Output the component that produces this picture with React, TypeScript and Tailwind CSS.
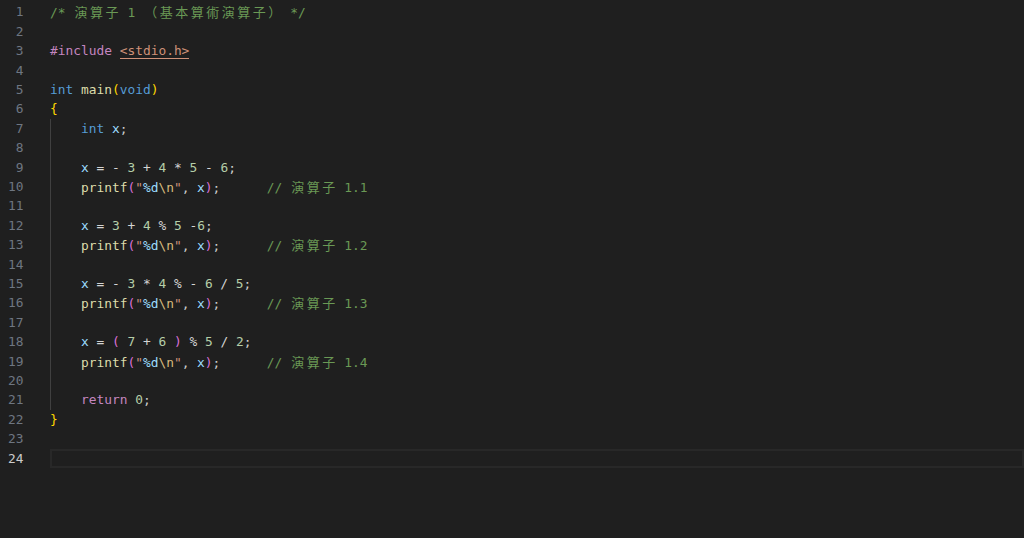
import React from "react";

type Tok = [string, string];

const C = {
  cm: "text-[#6a9955]",
  kw: "text-[#c586c0]",
  ty: "text-[#569cd6]",
  fn: "text-[#dcdcaa]",
  va: "text-[#9cdcfe]",
  op: "text-[#d4d4d4]",
  pu: "text-[#cccccc]",
  nu: "text-[#b5cea8]",
  b1: "text-[#ffd700]",
  b2: "text-[#da70d6]",
  st: "text-[#ce9178]",
  es: "text-[#d7ba7d]",
  inc: "text-[#ce9178] border-b border-[#ce9178]",
};

const CJK = /([\u3000-\u9fff\uff00-\uffef])/;

function renderText(text: string) {
  const parts = text.split(CJK);
  return parts.map((p, i) =>
    p.length === 1 && CJK.test(p) ? (
      <span
        key={i}
        className="inline-block w-[15.5px] text-center text-[13px] leading-[19.42px] font-['Noto_Sans_CJK_TC','Noto_Sans_CJK_JP',sans-serif]"
      >
        {p}
      </span>
    ) : (
      <React.Fragment key={i}>{p}</React.Fragment>
    )
  );
}

const printfLine = (n: string): Tok[] => [
  [C.fn, "printf"],
  [C.b2, "("],
  [C.st, '"'],
  [C.va, "%d"],
  [C.es, "\\n"],
  [C.st, '"'],
  [C.pu, ", "],
  [C.va, "x"],
  [C.b2, ")"],
  [C.pu, ";"],
  [C.op, "      "],
  [C.cm, "// 演算子 " + n],
];

const lines: { toks: Tok[]; guide?: boolean }[] = [
  { toks: [[C.cm, "/* 演算子 1 （基本算術演算子） */"]] },
  { toks: [] },
  { toks: [[C.kw, "#include"], [C.op, " "], [C.inc, "<stdio.h>"]] },
  { toks: [] },
  {
    toks: [
      [C.ty, "int"],
      [C.op, " "],
      [C.fn, "main"],
      [C.b1, "("],
      [C.ty, "void"],
      [C.b1, ")"],
    ],
  },
  { toks: [[C.b1, "{"]] },
  { guide: true, toks: [[C.ty, "int"], [C.op, " "], [C.va, "x"], [C.pu, ";"]] },
  { guide: true, toks: [] },
  {
    guide: true,
    toks: [
      [C.va, "x"],
      [C.op, " = - "],
      [C.nu, "3"],
      [C.op, " + "],
      [C.nu, "4"],
      [C.op, " * "],
      [C.nu, "5"],
      [C.op, " - "],
      [C.nu, "6"],
      [C.pu, ";"],
    ],
  },
  { guide: true, toks: printfLine("1.1") },
  { guide: true, toks: [] },
  {
    guide: true,
    toks: [
      [C.va, "x"],
      [C.op, " = "],
      [C.nu, "3"],
      [C.op, " + "],
      [C.nu, "4"],
      [C.op, " % "],
      [C.nu, "5"],
      [C.op, " -"],
      [C.nu, "6"],
      [C.pu, ";"],
    ],
  },
  { guide: true, toks: printfLine("1.2") },
  { guide: true, toks: [] },
  {
    guide: true,
    toks: [
      [C.va, "x"],
      [C.op, " = - "],
      [C.nu, "3"],
      [C.op, " * "],
      [C.nu, "4"],
      [C.op, " % - "],
      [C.nu, "6"],
      [C.op, " / "],
      [C.nu, "5"],
      [C.pu, ";"],
    ],
  },
  { guide: true, toks: printfLine("1.3") },
  { guide: true, toks: [] },
  {
    guide: true,
    toks: [
      [C.va, "x"],
      [C.op, " = "],
      [C.b2, "("],
      [C.op, " "],
      [C.nu, "7"],
      [C.op, " + "],
      [C.nu, "6"],
      [C.op, " "],
      [C.b2, ")"],
      [C.op, " % "],
      [C.nu, "5"],
      [C.op, " / "],
      [C.nu, "2"],
      [C.pu, ";"],
    ],
  },
  { guide: true, toks: printfLine("1.4") },
  { guide: true, toks: [] },
  { guide: true, toks: [[C.kw, "return"], [C.op, " "], [C.nu, "0"], [C.pu, ";"]] },
  { toks: [[C.b1, "}"]] },
  { toks: [] },
  { toks: [] },
];

export default function App() {
  const active = 24;
  return (
    <div className="w-full h-[538px] overflow-hidden bg-[#1f1f1f] pt-[2.3px] font-['DejaVu_Sans_Mono','Liberation_Mono',monospace] text-[12.87px] leading-[19.42px] whitespace-pre">
      {lines.map((ln, i) => {
        const n = i + 1;
        const isActive = n === active;
        return (
          <div key={n} className="flex h-[19.42px]">
            <div
              className={
                "w-[23.5px] shrink-0 text-right " +
                (isActive ? "text-[#cccccc]" : "text-[#6e7681]")
              }
            >
              {n}
            </div>
            <div
              className={
                "ml-[26.5px] flex-1 flex items-stretch " +
                (isActive ? "border-2 border-[#282828]" : "")
              }
            >
              {ln.guide && (
                <span className="inline-block w-[4ch] shrink-0 border-l border-[#404040]" />
              )}
              <span>
                {ln.toks.map(([cls, txt], j) => (
                  <span key={j} className={cls}>
                    {renderText(txt)}
                  </span>
                ))}
              </span>
            </div>
          </div>
        );
      })}
    </div>
  );
}
